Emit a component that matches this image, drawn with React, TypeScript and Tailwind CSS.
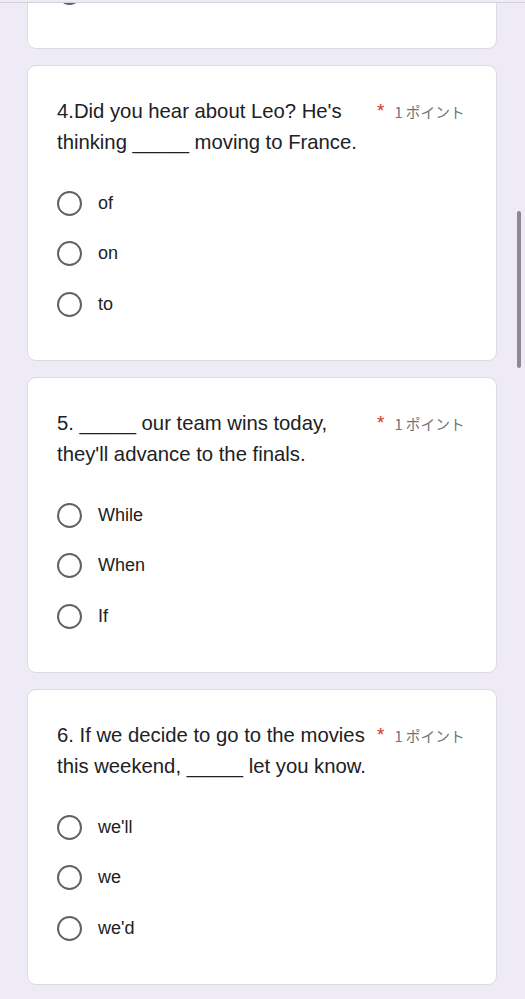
import React from "react";

type Question = {
  id: number;
  text: string;
  options: string[];
};

const questions: Question[] = [
  {
    id: 4,
    text: "4.Did you hear about Leo? He's\nthinking _____ moving to France.",
    options: ["of", "on", "to"],
  },
  {
    id: 5,
    text: "5. _____ our team wins today,\nthey'll advance to the finals.",
    options: ["While", "When", "If"],
  },
  {
    id: 6,
    text: "6. If we decide to go to the movies\nthis weekend, _____ let you know.",
    options: ["we'll", "we", "we'd"],
  },
];

function Radio({ className = "" }: { className?: string }) {
  return (
    <span
      className={`block w-[25px] h-[25px] rounded-full border-[2.5px] border-[#5f6368] shrink-0 ${className}`}
    />
  );
}

function QuestionCard({ q }: { q: Question }) {
  return (
    <div className="bg-white rounded-[9px] border border-[#dadce0] px-[29px] pt-[30px] pb-[30.5px]">
      <div className="flex items-start gap-[10px]">
        <p className="flex-1 whitespace-pre-line text-[20.3px] leading-[31px] text-[#202124]">
          {q.text}
        </p>
        <div className="flex items-start shrink-0 w-[90px] pt-[5px] font-['Noto_Sans_CJK_JP',sans-serif]">
          <span className="text-[#d93025] text-[19px] leading-[20px] mr-[10px] font-['Liberation_Sans',sans-serif]">
            *
          </span>
          <span className="text-[14.7px] leading-[22px] text-[#70757a] whitespace-nowrap">1 ポイント</span>
        </div>
      </div>
      <div className="mt-[20px] flex flex-col">
        {q.options.map((opt) => (
          <label key={opt} className="flex items-center h-[50.5px] gap-[16px]">
            <Radio />
            <span className="text-[18px] text-[#202124]">{opt}</span>
          </label>
        ))}
      </div>
    </div>
  );
}

export default function App() {
  return (
    <div className="relative min-h-[999px] bg-[#eeebf6] font-['Liberation_Sans',Arial,sans-serif] overflow-hidden">
      <div className="absolute top-0 left-0 right-0 h-[3px] bg-[#eeebf6] border-b border-[#d4d2d9] z-10" />
      <div className="absolute right-[4px] top-[211px] w-[4px] h-[157px] rounded-full bg-[#8c8894] z-10" />

      <div className="flex flex-col gap-[16px] pl-[27px] pr-[28px] pb-[16px]">
        <div className="h-[49px] bg-white rounded-b-[9px] border-x border-b border-[#dadce0] overflow-hidden px-[29px]">
          <Radio className="-mt-[20px]" />
        </div>
        {questions.map((q) => (
          <QuestionCard key={q.id} q={q} />
        ))}
      </div>
    </div>
  );
}
